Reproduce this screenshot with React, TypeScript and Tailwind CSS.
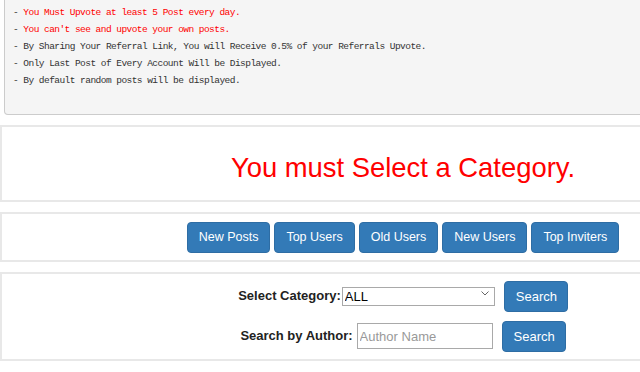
import React from 'react';

const rules = [
  { text: '- You Must Upvote at least 5 Post every day.', red: true },
  { text: "- You can't see and upvote your own posts.", red: true },
  { text: '- By Sharing Your Referral Link, You will Receive 0.5% of your Referrals Upvote.', red: false },
  { text: '- Only Last Post of Every Account Will be Displayed.', red: false },
  { text: '- By default random posts will be displayed.', red: false },
];

const tabs = ['New Posts', 'Top Users', 'Old Users', 'New Users', 'Top Inviters'];

const btn =
  'h-[31px] px-[11px] rounded-[4px] bg-[#337ab7] border border-[#2e6da4] text-white text-[12.5px] leading-none';

export default function App() {
  return (
    <div className="w-[640px] h-[372px] overflow-hidden bg-white font-['Liberation_Sans',Arial,sans-serif] text-[#333]">
      <div className="w-[806px]">
        {/* Rules box */}
        <pre className="ml-[4px] mr-[4px] bg-[#f5f5f5] border border-t-0 border-[#ccc] rounded-b-[4px] pl-[8px] pt-[4px] pb-[25px] font-['Liberation_Mono',monospace] text-[9.5px] tracking-[-0.54px] leading-[17px] text-[#333]">
          {rules.map((r) => (
            <div key={r.text}>
              <span>- </span>
              <span className={r.red ? 'text-[#ff0000]' : ''}>{r.text.slice(2)}</span>
            </div>
          ))}
        </pre>

        {/* Category message */}
        <div className="mt-[10px] h-[77px] border-2 border-[#e8e8e8] flex items-center justify-center pt-[9px]">
          <h2 className="text-[27.4px] text-[#ff0000] leading-none">You must Select a Category.</h2>
        </div>

        {/* Tabs */}
        <div className="mt-[10px] h-[50px] border-2 border-[#e8e8e8] flex items-center justify-center gap-[4px]">
          {tabs.map((t) => (
            <button key={t} className={btn}>
              {t}
            </button>
          ))}
        </div>

        {/* Search */}
        <div className="mt-[10px] h-[89px] border-2 border-[#e8e8e8] flex flex-col items-center justify-center gap-[9px] pb-[1px]">
          <div className="flex items-center">
            <label className="text-[13px] font-bold text-[#222]">Select Category:</label>
            <div className="relative ml-[1px]">
              <select className="appearance-none w-[153px] h-[19px] border border-[#a9a9a9] bg-white text-[13px] leading-none pl-[2px] text-black outline-none">
                <option>ALL</option>
              </select>
              <svg
                className="absolute right-[6px] top-[7px] pointer-events-none"
                width="8"
                height="5"
                viewBox="0 0 8 5"
                fill="none"
                stroke="#666"
                strokeWidth="1"
              >
                <path d="M0.5 0.5l3.5 3.5L7.5 0.5" />
              </svg>
            </div>
            <button className={`${btn} ml-[9px] w-[64px] h-[30px] text-[13px]`}>Search</button>
          </div>
          <div className="flex items-center">
            <label className="text-[13px] font-bold text-[#222]">Search by Author:</label>
            <input
              placeholder="Author Name"
              className="ml-[4px] w-[136px] h-[26px] border border-[#a9a9a9] bg-white text-[13px] px-[2px] placeholder:text-[#999] outline-none"
            />
            <button className={`${btn} ml-[9px] w-[64px] h-[30px] text-[13px]`}>Search</button>
          </div>
        </div>
      </div>
    </div>
  );
}
